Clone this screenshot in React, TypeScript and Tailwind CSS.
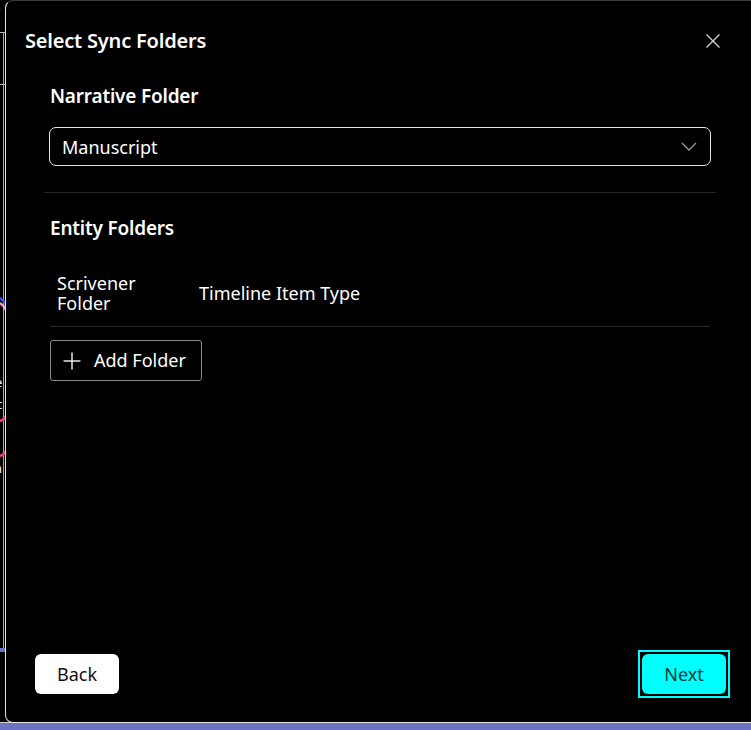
import React from "react";

function Chevron() {
  return (
    <svg width="16" height="9" viewBox="0 0 16 9" fill="none">
      <path d="M1 1l7 7 7-7" stroke="#9a9a9a" strokeWidth="1.3" />
    </svg>
  );
}

function CloseIcon() {
  return (
    <svg width="16" height="16" viewBox="0 0 16 16" fill="none">
      <path d="M1.5 1.5l13 13M14.5 1.5l-13 13" stroke="#cfcfcf" strokeWidth="1.4" />
    </svg>
  );
}

function PlusIcon() {
  return (
    <svg width="20" height="20" viewBox="0 0 20 20" fill="none">
      <path d="M10 1.5v17M1.5 10h17" stroke="#e8e8e8" strokeWidth="1.5" />
    </svg>
  );
}

export default function App() {
  return (
    <div
      className="relative w-[751px] h-[730px] overflow-hidden bg-black"
      style={{ fontFamily: '"Noto Sans", "Open Sans", sans-serif' }}
    >
      {/* background page peeking at the left */}
      <div className="absolute left-0 top-0 w-[6px] h-[730px] overflow-hidden">
        <span className="absolute left-[-6px] top-[4px] text-[15px] text-white leading-none">r</span>
        <div className="absolute left-0 top-[32px] w-[6px] h-px bg-[#bbbbbb]" />
        <div className="absolute left-0 top-[84px] w-[6px] h-px bg-[#bbbbbb]" />
        <div className="absolute left-[3px] top-[32px] w-px h-[618px] bg-[#aaaaaa]" />
        <svg className="absolute left-0 top-[296px]" width="6" height="20" viewBox="0 0 6 20">
          <path d="M0 2 Q4 5 6 9" stroke="#2f5be8" strokeWidth="2.5" fill="none" />
          <path d="M0 7 Q4 10 6 14" stroke="#f4a3c0" strokeWidth="2.5" fill="none" />
        </svg>
        <span className="absolute left-[-5px] top-[376px] text-[13px] text-white leading-none">e</span>
        <span className="absolute left-[-4px] top-[398px] text-[13px] text-white leading-none">c</span>
        <svg className="absolute left-0 top-[414px]" width="6" height="10" viewBox="0 0 6 10">
          <path d="M0 7 Q4 6 6 2" stroke="#f0407a" strokeWidth="2.5" fill="none" />
        </svg>
        <svg className="absolute left-0 top-[450px]" width="6" height="10" viewBox="0 0 6 10">
          <path d="M0 6 Q4 5 6 1" stroke="#f0407a" strokeWidth="2.5" fill="none" />
        </svg>
        <span className="absolute left-[-6px] top-[462px] text-[13px] text-white leading-none">h</span>
        <div className="absolute left-0 top-[648px] w-[6px] h-[4px] bg-[#6b73c2]" />
      </div>
      <div className="absolute left-0 top-[723px] w-[751px] h-[7px] bg-[#6b73c2]" />
      <div className="absolute left-0 top-[722px] w-[751px] h-px bg-[#d0d0d0]" />

      {/* modal */}
      <div className="absolute left-[5px] top-0 w-[760px] h-[723px] rounded-lg border border-[#e6e6e6] border-t-[#3a3a3a] bg-black flex flex-col text-white">
        <div className="flex items-center justify-between pl-[19px] pr-[43px] pt-[26px]">
          <h2 className="text-[20px] font-semibold leading-[28px] tracking-[-0.2px]">Select Sync Folders</h2>
          <CloseIcon />
        </div>

        <div className="pl-[38px] pr-[48px] pt-[29px] flex flex-col">
          <div className="px-[6px]">
            <div className="text-[19px] font-semibold leading-[24px] tracking-[-0.2px]">Narrative Folder</div>
            <div className="mt-[19px] mx-[-1px] h-[39px] rounded-[7px] border border-[#e6e6e6] flex items-center justify-between pl-[12px] pr-[13px]">
              <span className="text-[18px] leading-none">Manuscript</span>
              <Chevron />
            </div>
          </div>

          <div className="mt-[26px] h-px bg-[#262626]" />

          <div className="px-[6px] pt-[23px]">
            <div className="text-[19px] font-semibold leading-[24px] tracking-[-0.2px]">Entity Folders</div>
            <div className="mt-[33px] flex items-center border-b border-[#2a2a2a] pb-[13px]">
              <div className="w-[149px] pl-[7px] text-[18px] leading-[20px]">
                <div>Scrivener</div>
                <div>Folder</div>
              </div>
              <div className="text-[18px] leading-[20px]">Timeline Item Type</div>
            </div>
            <button className="mt-[13px] h-[41px] w-[152px] rounded-[3px] border border-[#8a8a8a] flex items-center pl-[11px] gap-[12px] text-[18px] text-white">
              <PlusIcon />
              <span>Add Folder</span>
            </button>
          </div>
        </div>

        <div className="mt-auto flex items-center justify-between pl-[29px] pr-[34px] pb-[24px]">
          <button className="w-[84px] h-[40px] rounded-[6px] bg-white text-[#111] text-[18px]">Back</button>
          <div className="border-2 border-[#00ffff] p-[2px]">
            <button className="block w-[84px] h-[40px] rounded-[6px] bg-[#00ffff] text-[#073b3b] text-[18px]">
              Next
            </button>
          </div>
        </div>
      </div>
    </div>
  );
}
